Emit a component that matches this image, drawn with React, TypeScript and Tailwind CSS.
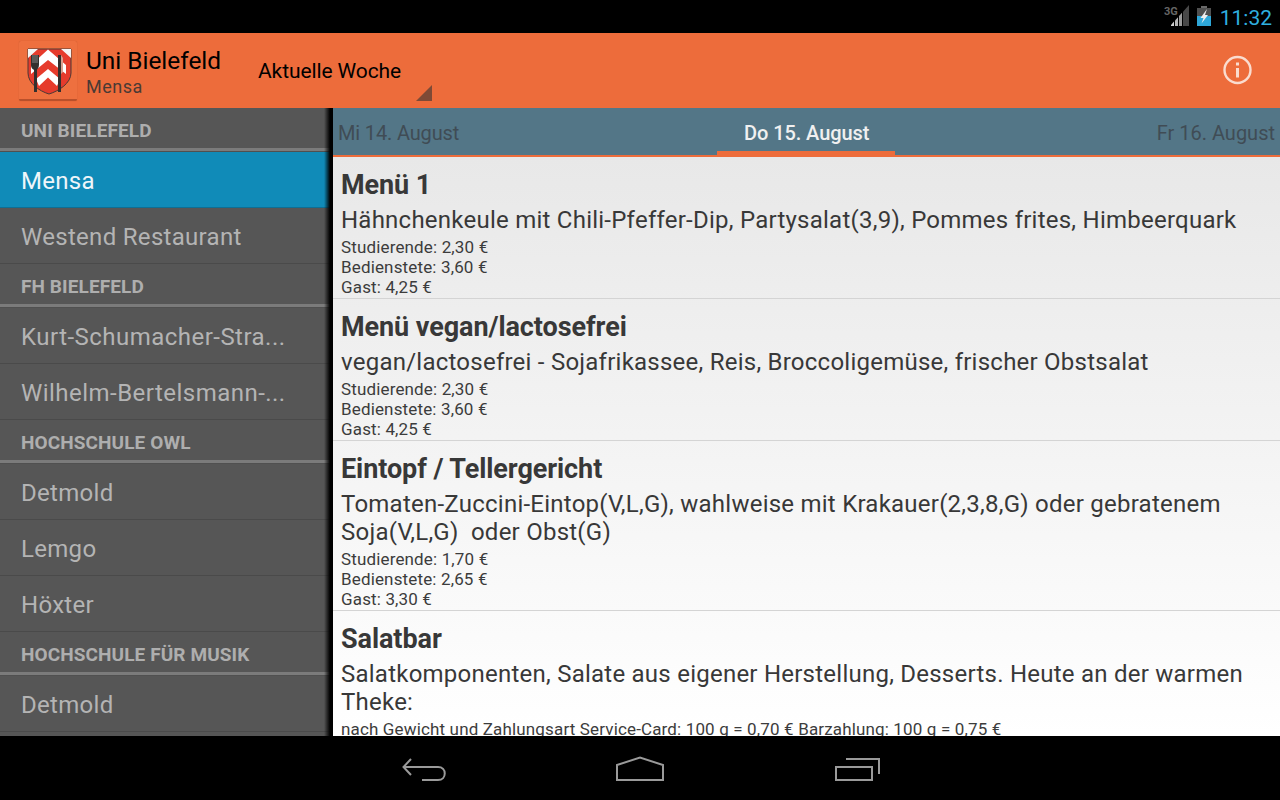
import React from "react";

function Header({ t }: { t: string }) {
  return (
    <div className="h-[44px] shrink-0 flex flex-col">
      <div className="h-[40px] pl-[21px] pt-[12px] text-[19px] leading-[21px] font-bold text-[#aeaeae] tracking-[0.1px] whitespace-nowrap">{t}</div>
      <div className="h-[3px] bg-[#7b7b7b]" />
      <div className="h-px bg-[#505050]" />
    </div>
  );
}

function Item({ t, active, wide }: { t: string; active?: boolean; wide?: boolean }) {
  return (
    <div className={`h-[56px] shrink-0 flex items-center pl-[21px] pt-[2px] text-[24px] border-b ${active ? "bg-[#108bb8] text-[#eef6fa] border-[#0e6f94]" : "text-[#b4b4b4] border-[#4a4a4a]"}`}>
      <span className={`whitespace-nowrap ${wide ? "tracking-[0.47px]" : "tracking-[0.3px]"}`}>{t}</span>
    </div>
  );
}

function Dish({ title, desc, prices, h }: { title: string; desc: React.ReactNode; prices: string[]; h: string }) {
  return (
    <div className={`${h} shrink-0 border-b border-[#d4d4d4] pl-[8px] pr-[30px] pt-[10px] overflow-hidden`}>
      <div className="text-[27px] leading-[36px] font-bold text-[#383838] tracking-[-0.08px]">{title}</div>
      <div className="text-[24px] leading-[28px] text-[#383838] mt-[3px] tracking-[0.24px]">{desc}</div>
      <div className="mt-[3px] text-[17px] leading-[20px] text-[#3c3c3c] tracking-[0.15px] whitespace-nowrap">
        {prices.map((p) => (
          <div key={p}>{p}</div>
        ))}
      </div>
    </div>
  );
}

const std = ["Studierende: 2,30 €", "Bedienstete: 3,60 €", "Gast: 4,25 €"];

export default function App() {
  return (
    <div className="w-[1280px] h-[800px] flex flex-col overflow-hidden bg-black font-['Roboto',sans-serif]">
      {/* status bar */}
      <div className="h-[33px] shrink-0 bg-black flex items-start justify-end pr-[8px]">
        <svg width="50" height="33" viewBox="0 0 50 33" className="mr-[7px]">
          <text x="1" y="15" fontSize="11" fontWeight="700" fill="#666666" fontFamily="Roboto">3G</text>
          <polygon points="8,26 8,24.9 11,21.6 11,26" fill="#d0d0d0" />
          <polygon points="12,26 12,20.5 15,17.2 15,26" fill="#b8b8b8" />
          <polygon points="16,26 16,16.1 19,12.8 19,26" fill="#9c9c9c" />
          <polygon points="20,26 20,11.7 26,5 26,26" fill="#484848" />
          <rect x="38" y="6" width="6" height="2" fill="#6a6a6a" />
          <rect x="34" y="8" width="14" height="18" fill="#505050" />
          <rect x="34" y="16" width="14" height="10" fill="#2ea7d8" />
          <polygon points="44,9 37.5,18 40.5,18 38.5,23.5 45,15 42,15" fill="#eeeeee" />
        </svg>
        <span className="text-[21px] leading-[26px] pt-[5px] h-[31px] text-[#2fb0e0]">11:32</span>
      </div>
      {/* action bar */}
      <div className="h-[75px] shrink-0 bg-[#ed6c3b] flex items-center relative">
        <div className="ml-[19px] w-[58px] h-[60px] bg-[#ee703f] border-b-2 border-[#b9502b] rounded-[2px] shadow-[0_0_1px_#b9502b]">
          <svg width="58" height="58" viewBox="0 0 58 58">
            <path d="M9 8 H52 V32 C52 42 40 50 30 53 C20 50 9 42 9 32 Z" fill="#e63b2c" stroke="#4a3a36" strokeWidth="1" />
            <path d="M9 8 H19 L9 17 Z M52 8 H42 L52 17 Z" fill="#f4f4f4" />
            <path d="M12 24 L29 8.5 L47 24 L47 33 L29 19 L12 33 Z" fill="#ffffff" />
            <path d="M29 28 L41 38 L38 45 L29 36.5 L20 45 L17 38 Z" fill="#ffffff" />
            <path d="M15 28 H18 V51 H15 Z" fill="#33302e" />
            <path d="M12 14 H20 V24 C20 27 18 29 16.5 29 C14 29 12 27 12 24 Z" fill="#33302e" />
            <path d="M14 14 V22 M16 14 V22 M18 14 V22" stroke="#9a9a9a" strokeWidth="0.8" />
            <path d="M39 14 H42 V51 H39 Z" fill="#33302e" />
            <path d="M42 14 L44 17 V31 L42 33 Z" fill="#d8a090" />
          </svg>
        </div>
        <div className="ml-[9px] w-[172px] pt-[2px]">
          <div className="text-[24.4px] leading-[30px] text-black">Uni Bielefeld</div>
          <div className="text-[18px] leading-[22px] text-[#4a3a34] tracking-[0.5px]">Mensa</div>
        </div>
        <div className="w-[174px] h-full relative">
          <div className="pt-[25px] text-[21px] leading-[27px] text-black tracking-[-0.1px] whitespace-nowrap">Aktuelle Woche</div>
          <svg width="16" height="16" viewBox="0 0 16 16" className="absolute right-0 bottom-[7px]">
            <polygon points="0,16 16,16 16,0" fill="#7e4a36" />
          </svg>
        </div>
        <svg width="30" height="30" viewBox="0 0 30 30" className="absolute left-[1223px] top-[22px]">
          <circle cx="14.5" cy="15" r="13" fill="none" stroke="#fadccf" strokeWidth="2.4" />
          <rect x="13" y="13" width="3" height="9.5" fill="#fadccf" />
          <rect x="13" y="7.5" width="3" height="3" fill="#fadccf" />
        </svg>
      </div>
      {/* body */}
      <div className="h-[628px] shrink-0 flex overflow-hidden">
        <div className="w-[330px] shrink-0 bg-[#565656] flex flex-col overflow-hidden relative">
          <Header t="UNI BIELEFELD" />
          <Item t="Mensa" active />
          <Item t="Westend Restaurant" />
          <Header t="FH BIELEFELD" />
          <Item t="Kurt-Schumacher-Stra..." wide />
          <Item t="Wilhelm-Bertelsmann-..." wide />
          <Header t="HOCHSCHULE OWL" />
          <Item t="Detmold" />
          <Item t="Lemgo" />
          <Item t="Höxter" />
          <Header t="HOCHSCHULE FÜR MUSIK" />
          <Item t="Detmold" />
          <div className="absolute top-0 bottom-0 right-0 w-[6px] bg-gradient-to-r from-transparent to-[#000000]" />
        </div>
        <div className="w-[3px] shrink-0 bg-black" />
        <div className="flex-1 min-w-0 flex flex-col overflow-hidden">
          <div className="h-[49px] shrink-0 bg-[#537687] border-b-2 border-[#ed6c3b] relative flex items-start justify-between px-[5px] pt-[11px] text-[20px] leading-[28px]">
            <span className="text-[#404c55] tracking-[-0.15px]">Mi 14. August</span>
            <span className="text-[#404c55]">Fr 16. August</span>
            <span className="absolute left-[411px] top-[11px] text-[#f0f0f0] font-medium tracking-[-0.08px]">Do 15. August</span>
            <div className="absolute left-[384px] bottom-0 w-[178px] h-[4px] bg-[#ed6c3b]" />
          </div>
          <div className="flex-1 flex flex-col overflow-hidden bg-gradient-to-b from-[#e8e8e8] to-[#ffffff]">
            <Dish h="h-[142px]" title="Menü 1" desc="Hähnchenkeule mit Chili-Pfeffer-Dip, Partysalat(3,9), Pommes frites, Himbeerquark" prices={std} />
            <Dish h="h-[142px]" title="Menü vegan/lactosefrei" desc="vegan/lactosefrei - Sojafrikassee, Reis, Broccoligemüse, frischer Obstsalat" prices={std} />
            <Dish h="h-[170px]" title="Eintopf / Tellergericht" desc={<>Tomaten-Zuccini-Eintop(V,L,G), wahlweise mit Krakauer(2,3,8,G) oder gebratenem<br />Soja(V,L,G)&nbsp; oder Obst(G)</>} prices={["Studierende: 1,70 €", "Bedienstete: 2,65 €", "Gast: 3,30 €"]} />
            <Dish h="h-[170px]" title="Salatbar" desc={<>Salatkomponenten, Salate aus eigener Herstellung, Desserts. Heute an der warmen<br />Theke:</>} prices={["nach Gewicht und Zahlungsart Service-Card: 100 g = 0,70 € Barzahlung: 100 g = 0,75 €"]} />
          </div>
        </div>
      </div>
      {/* nav bar */}
      <div className="flex-1 bg-black flex items-center justify-center">
        <svg width="480" height="30" viewBox="0 0 480 30" fill="none" stroke="#9a9a9a" strokeWidth="2" className="mt-[2px]">
          <path d="M11 5 L3.5 13 L11 21 M4 13 H38 C47 13 47 26 38 26 H22" />
          <path d="M217 26 V11 L240 3.5 L263 11 V26 Z" />
          <path d="M436 13 H472 V26 H436 Z M446 5 H479 V20" />
        </svg>
      </div>
    </div>
  );
}
